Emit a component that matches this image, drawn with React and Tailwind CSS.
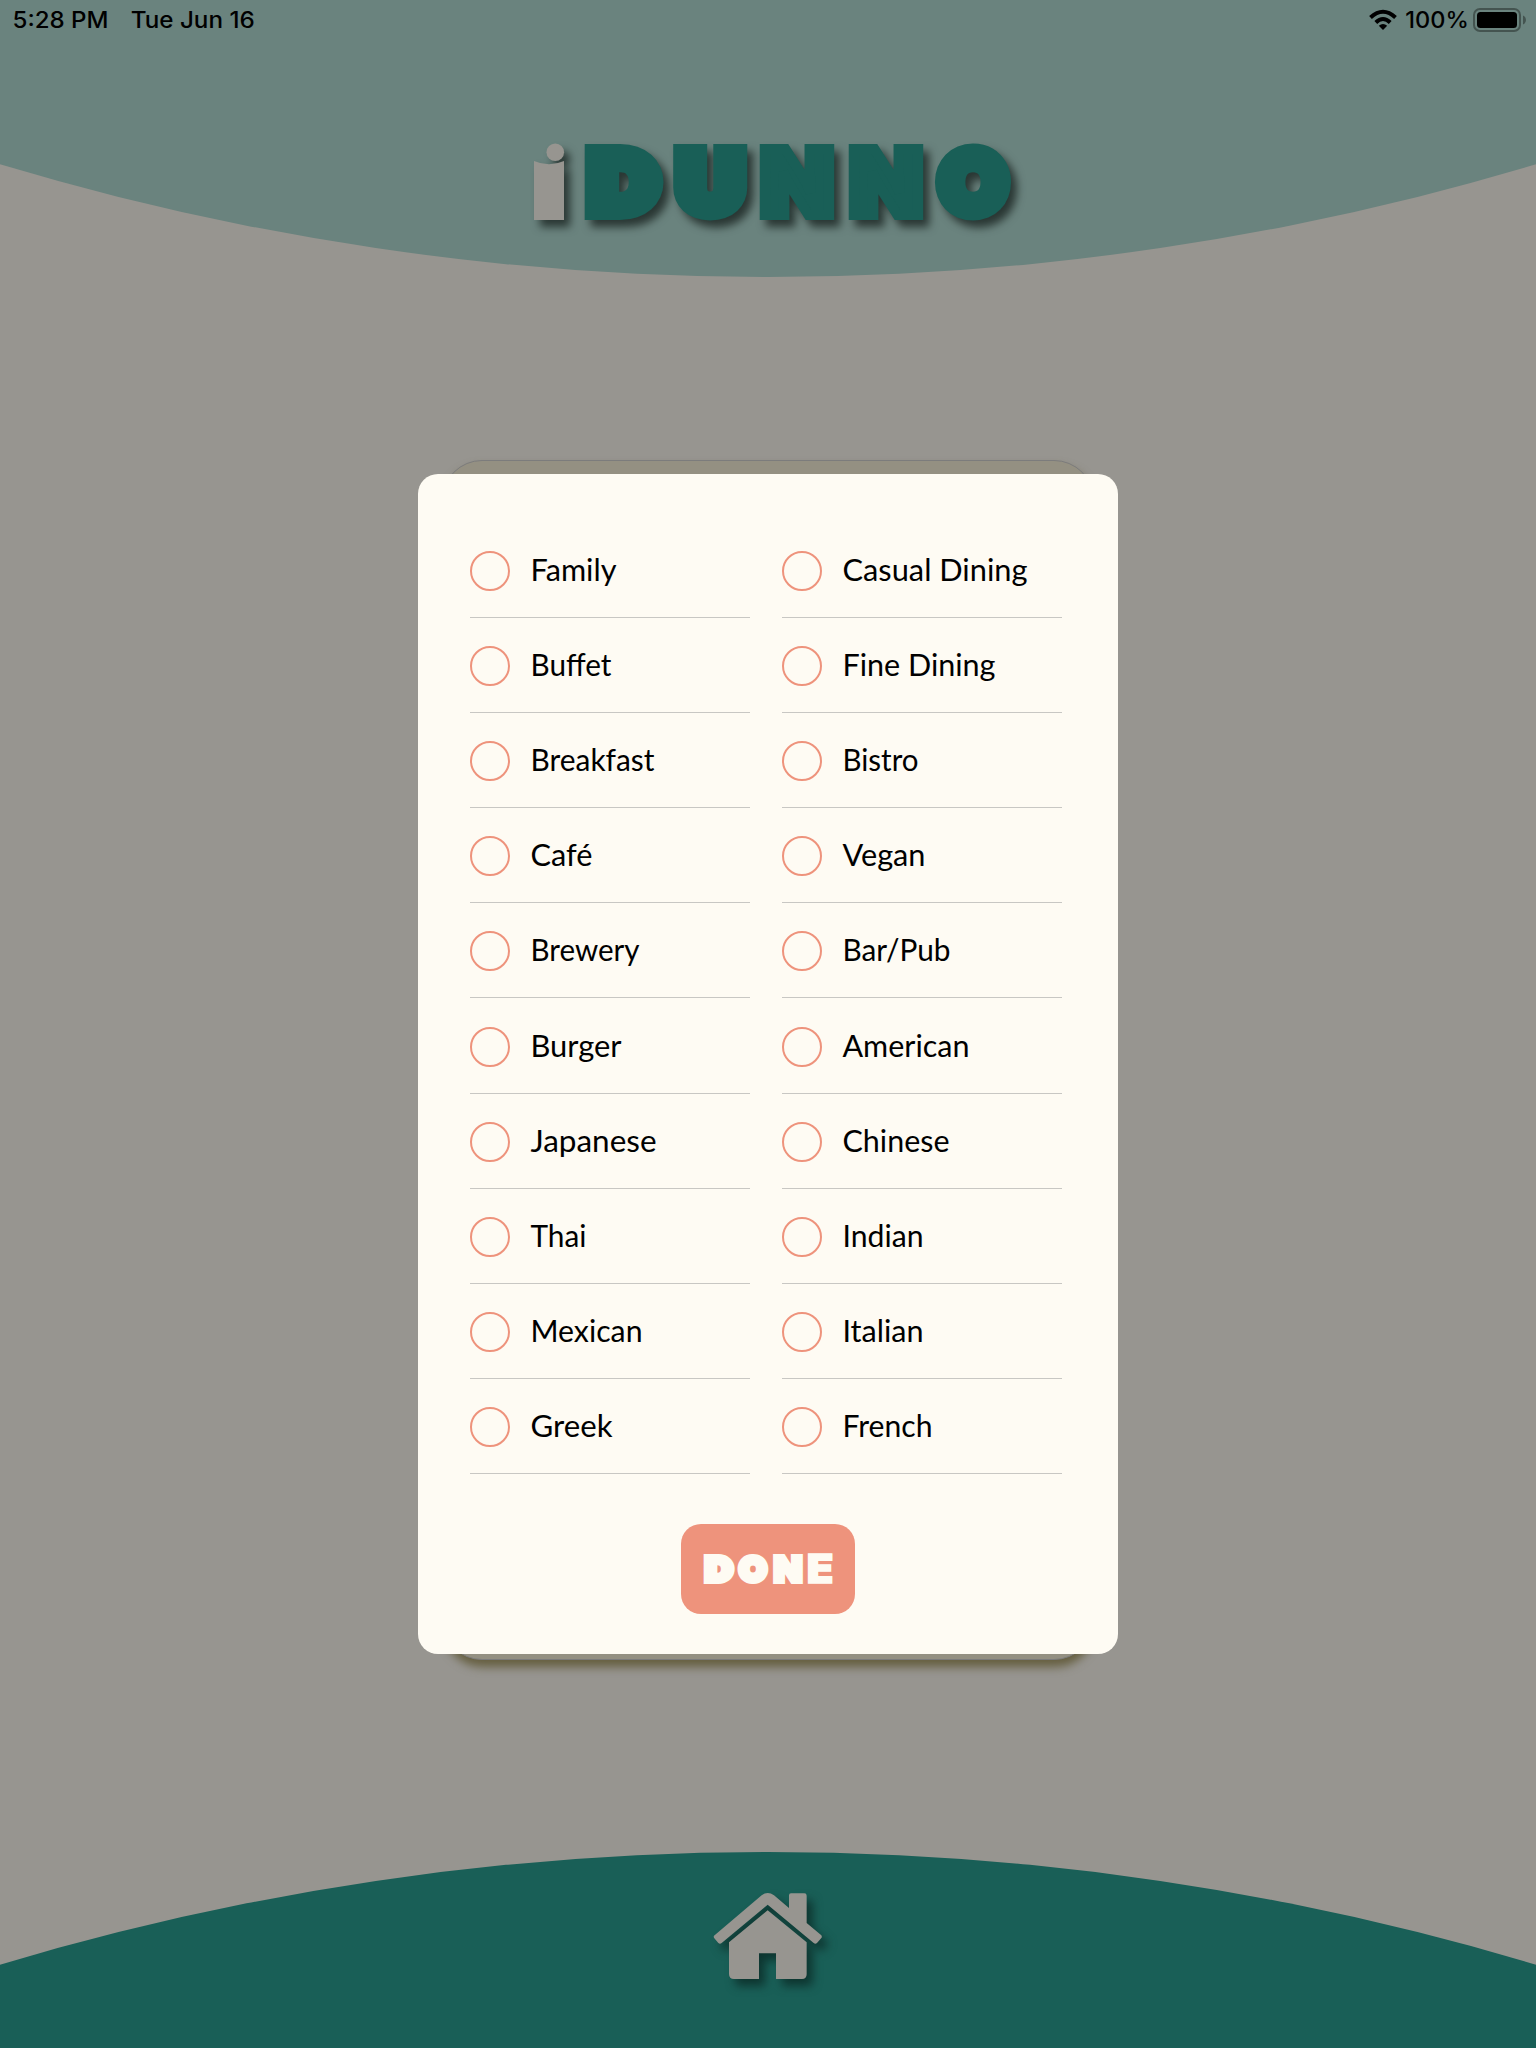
const rows = [
  ["Family", 86, "Casual Dining", 185],
  ["Buffet", 81, "Fine Dining", 153],
  ["Breakfast", 124, "Bistro", 76],
  ["Café", 62, "Vegan", 83],
  ["Brewery", 109, "Bar/Pub", 108],
  ["Burger", 91, "American", 127],
  ["Japanese", 126, "Chinese", 107],
  ["Thai", 56, "Indian", 81],
  ["Mexican", 112, "Italian", 81],
  ["Greek", 82, "French", 90],
];

function Option({ label, width }) {
  return (
    <div className="flex h-full w-[280px] items-center border-b border-[#c8c7c3]">
      <span className="mt-[2px] size-10 rounded-full border-2 border-[#ee937c]" />
      <svg className="ml-5 mt-[2px] h-10 w-[210px] overflow-visible" role="img" aria-label={label}>
        <text x="0.5" y="29.5" textLength={width} lengthAdjust="spacingAndGlyphs" fontSize="30" fontFamily="Lato, sans-serif" fill="#000">{label}</text>
      </svg>
    </div>
  );
}

function StatusBar() {
  return (
    <div className="flex h-10 items-center justify-between pr-[10px] font-['Inter',sans-serif] font-medium text-black">
      <svg className="h-10 w-[260px]" fontSize="22.4">
        <text x="12.5" y="27.8" textLength="96" lengthAdjust="spacingAndGlyphs">5:28 PM</text>
        <text x="130.7" y="27.8" textLength="124" lengthAdjust="spacingAndGlyphs">Tue Jun 16</text>
      </svg>
      <svg className="h-10 w-[160px]" viewBox="0 0 160 40">
        <g fill="none" stroke="#000" strokeWidth="4">
          <path d="M4.500 17.500 Q17 6 29.500 17.500" />
          <path d="M9.800 22.500 Q17 15.500 24.200 22.500" />
        </g>
        <path d="M12.800 25.700 Q17 22.200 21.200 25.700 L17 29.900 Z" />
        <text x="39.3" y="27.8" textLength="63.5" lengthAdjust="spacingAndGlyphs" fontSize="22.4">100%</text>
        <rect x="108" y="9" width="46" height="22" rx="6" fill="none" stroke="#445450" strokeWidth="2" />
        <rect x="111" y="12" width="40" height="16" rx="3.500" />
        <path d="M157 15.500 Q160 17 160 20 Q160 23 157 24.500 Z" fill="#445450" />
      </svg>
    </div>
  );
}

function Logo() {
  return (
    <svg className="h-[130px] w-[530px] [filter:drop-shadow(6px_7px_4px_rgba(20,30,27,0.75))]" viewBox="0 0 530 130">
      <circle cx="45.300" cy="32.200" r="8.800" fill="#979590" />
      <path d="M24 41 Q39 47.600 54 41 V100 H24 Z" fill="#979590" />
      <g fontFamily="Lato, sans-serif" fontWeight="700" fontSize="77" fill="#195f57" stroke="#195f57" strokeWidth="20" strokeLinejoin="miter">
        <text x="79" y="90" textLength="66.500" lengthAdjust="spacingAndGlyphs">D</text>
        <text x="168.300" y="90" textLength="64" lengthAdjust="spacingAndGlyphs">U</text>
        <text x="432" y="90" textLength="62" lengthAdjust="spacingAndGlyphs">O</text>
      </g>
      <g fontFamily="Inter, sans-serif" fontWeight="900" fontSize="91" fill="#195f57" stroke="#195f57" strokeWidth="10" strokeLinejoin="miter">
        <text x="250.500" y="95" textLength="73" lengthAdjust="spacingAndGlyphs">N</text>
        <text x="339.500" y="95" textLength="73" lengthAdjust="spacingAndGlyphs">N</text>
      </g>
    </svg>
  );
}

export default function App() {
  return (
    <div className="relative flex h-[2048px] w-[1536px] flex-col overflow-hidden bg-[#979590]">
      <svg className="absolute left-0 top-0 h-[277px] w-[1536px]">
        <circle cx="768" cy="-2396" r="2673" fill="#6a837e" />
      </svg>
      <svg className="absolute bottom-0 left-0 h-[196px] w-[1536px]">
        <circle cx="768" cy="2673" r="2673" fill="#195f57" />
      </svg>
      <div className="relative">
        <StatusBar />
      </div>
      <header className="relative mt-20 h-[130px] pl-[510px]">
        <Logo />
      </header>
      <main className="relative mt-[224px] h-[1180px] self-center">
        <div className="absolute -bottom-[6px] -top-[14px] left-[24px] right-[24px] rounded-[40px] border border-[#7c7c7c] bg-[#949082] shadow-[1px_7px_10px_#665f40]" />
        <section className="relative flex h-[1180px] w-[700px] flex-col items-center rounded-[20px] bg-[#fefbf3]">
          <div className="mr-1 mt-[49px] flex h-[951px] w-[592px] flex-col">
            {rows.map(([a, aw, b, bw]) => (
              <div key={a} className="flex min-h-0 flex-1 justify-between">
                <Option label={a} width={aw} />
                <Option label={b} width={bw} />
              </div>
            ))}
          </div>
          <button className="mt-[50px] h-[90px] w-[174px] rounded-[20px] bg-[#ee937c]" aria-label="DONE">
            <svg className="h-[90px] w-[174px]">
              <g fontFamily="Lato, sans-serif" fontWeight="700" fontSize="30.500" fill="#fefbf3" stroke="#fefbf3" strokeWidth="8">
                <text x="24.500" y="56" textLength="26" lengthAdjust="spacingAndGlyphs">D</text>
                <text x="59.500" y="56" textLength="25" lengthAdjust="spacingAndGlyphs">O</text>
              </g>
              <g fontFamily="Inter, sans-serif" fontWeight="900" fill="#fefbf3" stroke="#fefbf3">
                <text x="92.400" y="58" fontSize="35.700" strokeWidth="4" textLength="29" lengthAdjust="spacingAndGlyphs">N</text>
                <text x="125.800" y="59.200" fontSize="39.200" strokeWidth="1.500" textLength="26.700" lengthAdjust="spacingAndGlyphs">E</text>
              </g>
            </svg>
          </button>
        </section>
      </main>
      <button className="absolute left-[690px] top-[1840px]" aria-label="Home">
        <svg className="h-[170px] w-[160px] [filter:drop-shadow(6px_7px_5px_rgba(8,35,32,0.7))]" viewBox="0 0 480 510" fill="#979590">
          <path d="M72 287 L215 166 Q233 152 252 166 L297 204 V166 Q297 160 303 160 H343 Q350 160 350 167 V249 L394 286 Q397 290 394 294 L381 309 Q376 313 371 309 L233 194 L95 309 Q90 313 85 309 L73 295 Q70 291 72 287 Z" />
          <path d="M117 307 L233 211 L350 307 V403 Q350 417 336 417 H258 V340 H207 V417 H132 Q117 417 117 402 Z" />
        </svg>
      </button>
    </div>
  );
}
